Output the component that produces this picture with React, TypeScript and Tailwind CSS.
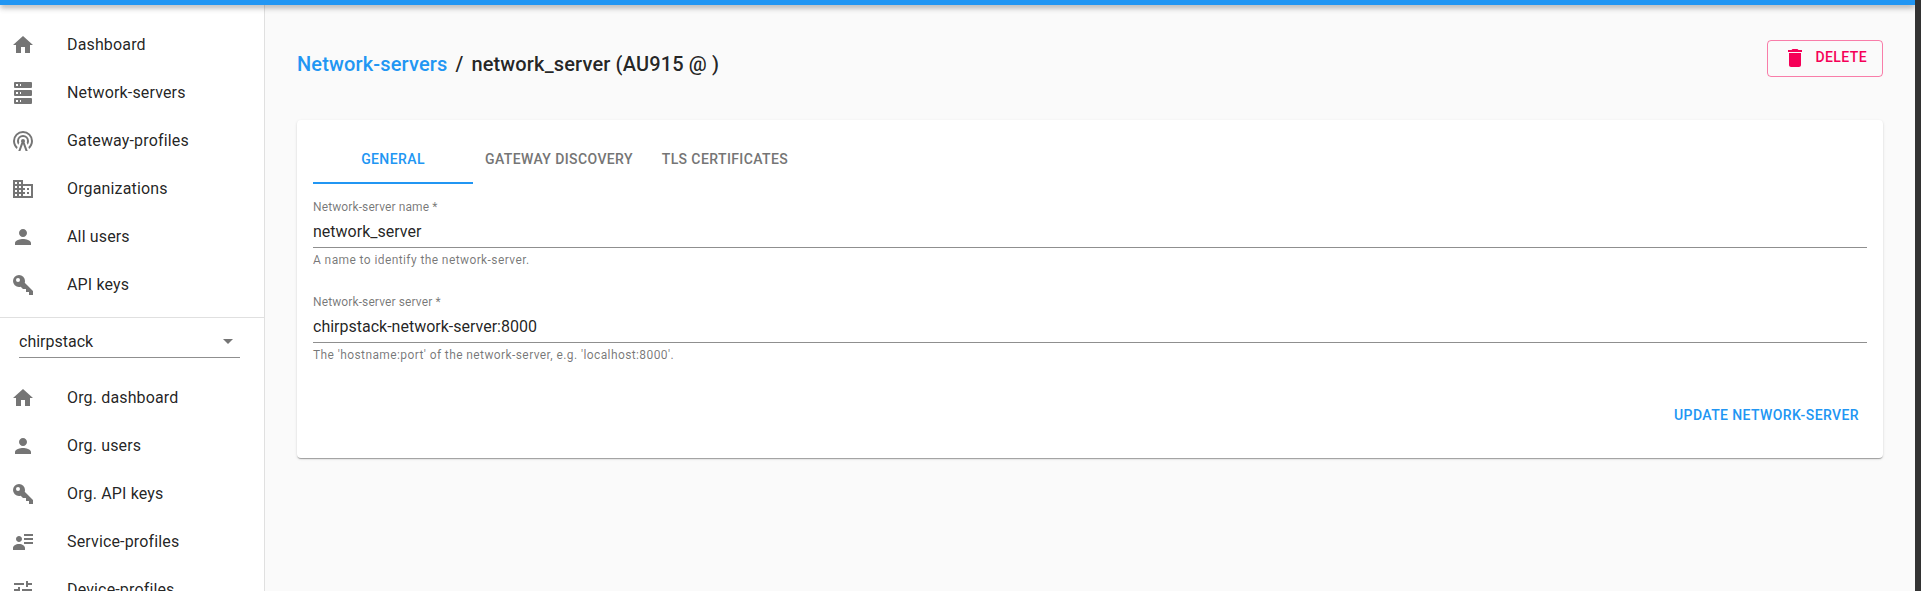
import React from "react";

const icons = {
  home: "M10 20v-6h4v6h5v-8h3L12 3 2 12h3v8z",
  server:
    "M4,1H20A1,1 0 0,1 21,2V6A1,1 0 0,1 20,7H4A1,1 0 0,1 3,6V2A1,1 0 0,1 4,1M4,9H20A1,1 0 0,1 21,10V14A1,1 0 0,1 20,15H4A1,1 0 0,1 3,14V10A1,1 0 0,1 4,9M4,17H20A1,1 0 0,1 21,18V22A1,1 0 0,1 20,23H4A1,1 0 0,1 3,22V18A1,1 0 0,1 4,17M9,5H10V3H9V5M9,13H10V11H9V13M9,21H10V19H9V21M5,3V5H7V3H5M5,11V13H7V11H5M5,19V21H7V19H5Z",
  radioTower:
    "M12,10A2,2 0 0,1 14,12C14,12.5 13.82,12.94 13.53,13.29L16.7,22H14.57L12,14.93L9.43,22H7.3L10.47,13.29C10.18,12.94 10,12.5 10,12A2,2 0 0,1 12,10M12,8A4,4 0 0,0 8,12C8,12.5 8.1,13 8.28,13.46L7.4,15.86C6.53,14.81 6,13.47 6,12A6,6 0 0,1 12,6A6,6 0 0,1 18,12C18,13.47 17.47,14.81 16.6,15.86L15.72,13.46C15.9,13 16,12.5 16,12A4,4 0 0,0 12,8M12,4A8,8 0 0,0 4,12C4,14.36 5,16.5 6.64,17.94L5.92,19.94C3.54,18.11 2,15.23 2,12A10,10 0 0,1 12,2A10,10 0 0,1 22,12C22,15.23 20.46,18.11 18.08,19.94L17.36,17.94C19,16.5 20,14.36 20,12A8,8 0 0,0 12,4Z",
  domain:
    "M12 7V3H2v18h20V7H12zM6 19H4v-2h2v2zm0-4H4v-2h2v2zm0-4H4V9h2v2zm0-4H4V5h2v2zm4 12H8v-2h2v2zm0-4H8v-2h2v2zm0-4H8V9h2v2zm0-4H8V5h2v2zm10 12h-8v-2h2v-2h-2v-2h2v-2h-2V9h8v10zm-2-8h-2v2h2v-2zm0 4h-2v2h2v-2z",
  person:
    "M12 12c2.21 0 4-1.79 4-4s-1.79-4-4-4-4 1.79-4 4 1.79 4 4 4zm0 2c-2.67 0-8 1.34-8 4v2h16v-2c0-2.66-5.33-4-8-4z",
  key: "M22,18V22H18V19H15V16H12L9.74,13.74C9.19,13.91 8.61,14 8,14A6,6 0 0,1 2,8A6,6 0 0,1 8,2A6,6 0 0,1 14,8C14,8.61 13.91,9.19 13.74,9.74L22,18M7,5A2,2 0 0,0 5,7A2,2 0 0,0 7,9A2,2 0 0,0 9,7A2,2 0 0,0 7,5Z",
  accountDetails:
    "M11 9C11 10.66 9.66 12 8 12C6.34 12 5 10.66 5 9C5 7.34 6.34 6 8 6C9.66 6 11 7.34 11 9M14 20H2V18C2 15.79 4.69 14 8 14C11.31 14 14 15.79 14 18M22 12V14H13V12M22 8V10H13V8M22 4V6H13V4Z",
  tune: "M3 17v2h6v-2H3zM3 5v2h10V5H3zm10 16v-2h8v-2h-8v-2h-2v6h2zM7 9v2H3v2h4v2h2V9H7zm14 4v-2H11v2h10zm-6-4h2V7h4V5h-4V3h-2v6z",
  trash: "M6 19c0 1.1.9 2 2 2h8c1.1 0 2-.9 2-2V7H6v12zM19 4h-3.5l-1-1h-5l-1 1H5v2h14V4z",
  dropdown: "M7 10l5 5 5-5z",
};

type IconName = keyof typeof icons;

function Icon({ name, className = "" }: { name: IconName; className?: string }) {
  return (
    <svg viewBox="0 0 24 24" className={`size-6 shrink-0 fill-current ${className}`} aria-hidden="true">
      <path d={icons[name]} />
    </svg>
  );
}

const globalItems: { icon: IconName; label: string }[] = [
  { icon: "home", label: "Dashboard" },
  { icon: "server", label: "Network-servers" },
  { icon: "radioTower", label: "Gateway-profiles" },
  { icon: "domain", label: "Organizations" },
  { icon: "person", label: "All users" },
  { icon: "key", label: "API keys" },
];

const orgItems: { icon: IconName; label: string }[] = [
  { icon: "home", label: "Org. dashboard" },
  { icon: "person", label: "Org. users" },
  { icon: "key", label: "Org. API keys" },
  { icon: "accountDetails", label: "Service-profiles" },
  { icon: "tune", label: "Device-profiles" },
];

function NavList({ items }: { items: { icon: IconName; label: string }[] }) {
  return (
    <ul className="py-2">
      {items.map((item) => (
        <li key={item.label} className="flex h-12 items-center gap-8 pl-[11px]">
          <Icon name={item.icon} className="text-[#757575]" />
          <span className="text-base tracking-[0.00938em]">{item.label}</span>
        </li>
      ))}
    </ul>
  );
}

function Sidebar() {
  return (
    <aside className="flex w-[265px] shrink-0 flex-col overflow-hidden border-r border-black/12 bg-white pt-2">
      <NavList items={globalItems} />
      <hr className="border-0 border-t border-[#e0e0e0]" />
      <div className="mr-6 mb-2 ml-[19px] flex h-10 shrink-0 items-center justify-between border-b border-[#8f8f8f] pt-[7px]">
        <span className="pt-0.5 text-base">chirpstack</span>
        <Icon name="dropdown" className="text-[#757575]" />
      </div>
      <NavList items={orgItems} />
    </aside>
  );
}

function Tab({ label, active = false }: { label: string; active?: boolean }) {
  return (
    <button
      type="button"
      className={`flex h-12 min-w-40 items-center justify-center border-b-2 px-3 text-sm font-medium tracking-[0.02857em] uppercase ${
        active ? "border-[#2196f3] text-[#2196f3]" : "border-transparent text-[#757575]"
      }`}
    >
      {label}
    </button>
  );
}

function Field({ label, value, helper }: { label: string; value: string; helper: string }) {
  return (
    <div className="flex flex-col">
      <span className="h-4 text-xs leading-[15px] tracking-[0.00938em] text-black/54">{label} *</span>
      <span className="h-8 border-b border-[#8f8f8f] pt-1.5 text-base leading-[19px]">{value}</span>
      <span className="mt-0.5 mb-px h-5 text-xs leading-5 tracking-[0.03333em] text-black/54">{helper}</span>
    </div>
  );
}

export default function App() {
  return (
    <div className="flex h-[591px] w-full overflow-hidden bg-[#333333] font-['Roboto',sans-serif] text-black/87">
      <div className="flex min-w-0 flex-1 flex-col overflow-hidden bg-[#fafafa]">
        <header className="z-10 h-[5px] shrink-0 bg-[#2196f3] shadow-[0_2px_4px_-1px_rgba(0,0,0,0.2),0_4px_5px_0_rgba(0,0,0,0.14),0_1px_10px_0_rgba(0,0,0,0.12)]" />
        <div className="flex min-h-0 flex-1">
          <Sidebar />
          <main className="flex-1 px-8 pt-[35px]">
            <div className="flex h-20 items-start justify-between">
              <h1 className="flex gap-2 pt-2 text-xl leading-8 font-medium tracking-[0.0075em]">
                <a className="text-[#2196f3]">Network-servers</a>
                <span>/</span>
                <span>network_server (AU915 @ )</span>
              </h1>
              <button
                type="button"
                className="flex h-[37px] w-29 items-center justify-between rounded border border-[#f50057]/50 px-[15px] text-sm font-medium tracking-[0.02857em] text-[#f50057] uppercase"
              >
                <Icon name="trash" className="mb-px" />
                <span className="pb-[3px]">Delete</span>
              </button>
            </div>
            <section className="h-[338px] rounded bg-white p-4 shadow-[0_2px_1px_-1px_rgba(0,0,0,0.2),0_1px_1px_0_rgba(0,0,0,0.14),0_1px_3px_0_rgba(0,0,0,0.12)]">
              <nav className="flex">
                <Tab label="General" active />
                <Tab label="Gateway discovery" />
                <Tab label="TLS certificates" />
              </nav>
              <form className="flex flex-col gap-6 pt-4">
                <Field label="Network-server name" value="network_server" helper="A name to identify the network-server." />
                <Field
                  label="Network-server server"
                  value="chirpstack-network-server:8000"
                  helper="The 'hostname:port' of the network-server, e.g. 'localhost:8000'."
                />
                <button
                  type="button"
                  className="mt-[7px] flex h-9 items-center self-end rounded px-2 text-sm font-medium tracking-[0.02857em] text-[#2196f3] uppercase"
                >
                  Update network-server
                </button>
              </form>
            </section>
          </main>
        </div>
      </div>
      <div className="w-1.5 shrink-0" />
    </div>
  );
}
